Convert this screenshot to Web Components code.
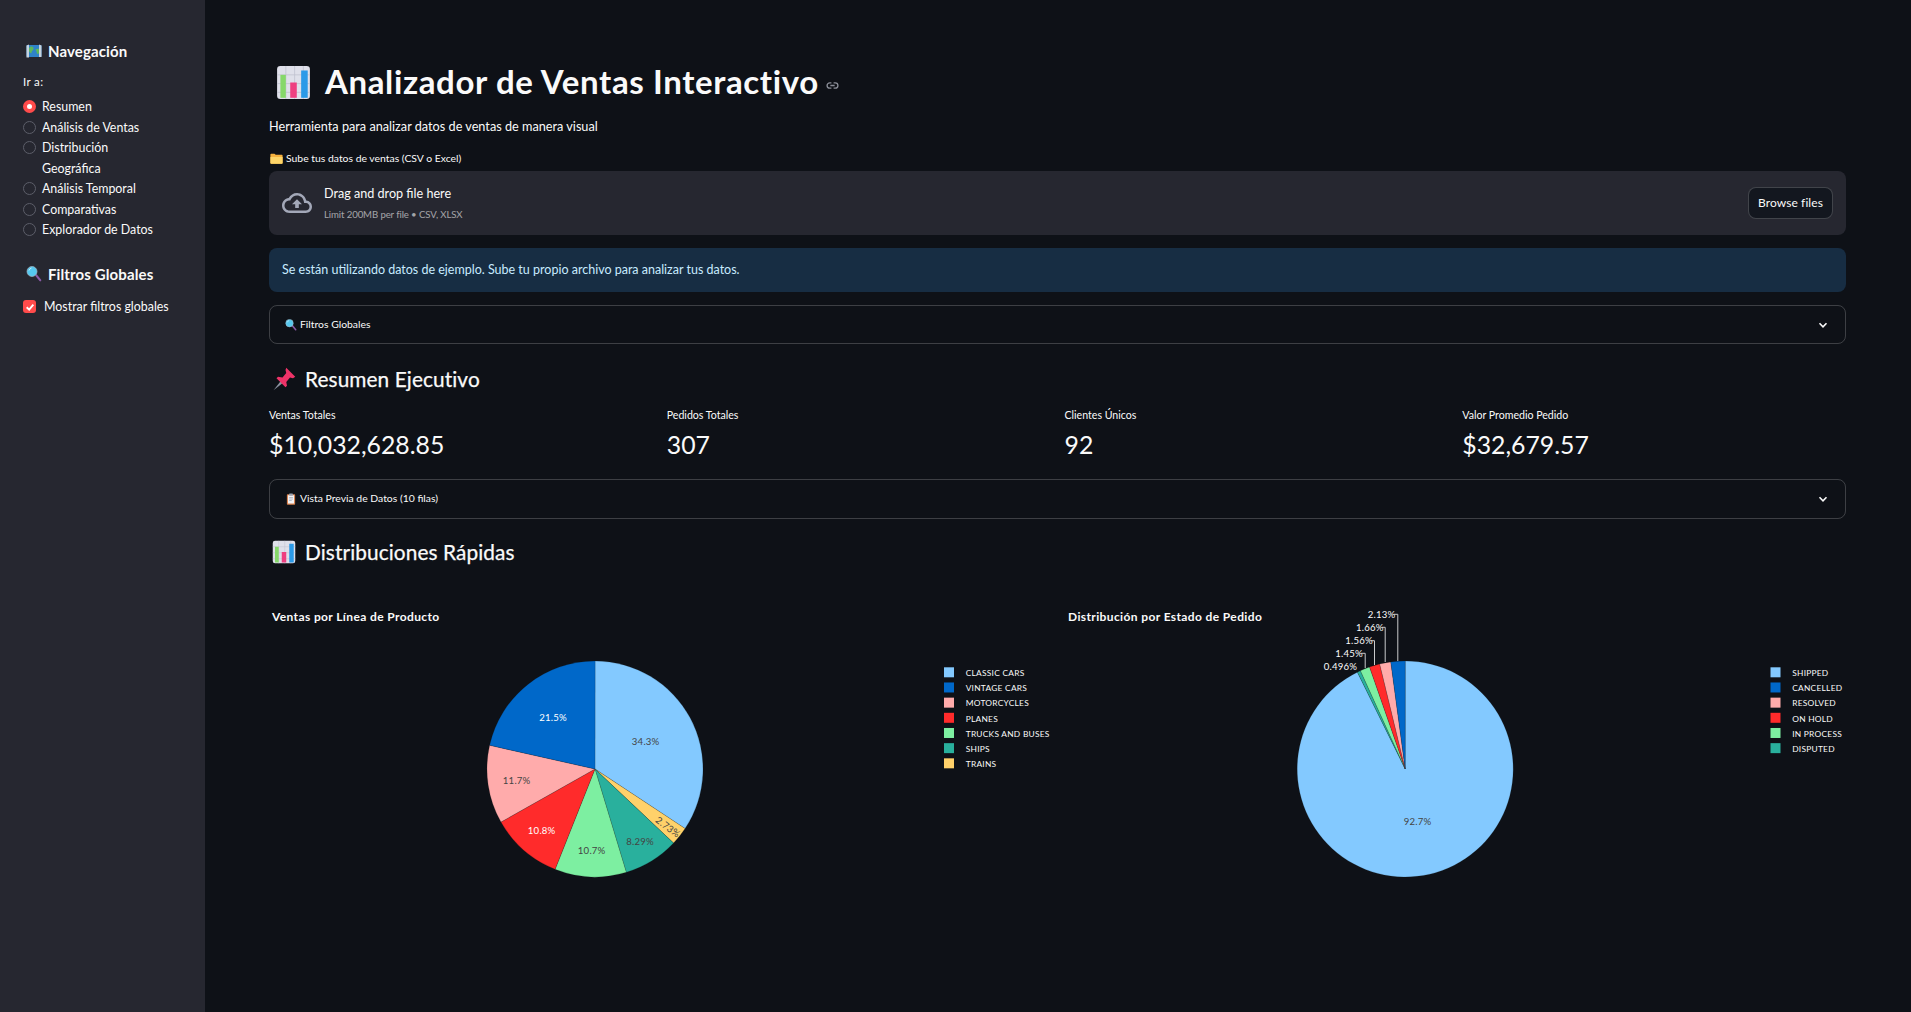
<!DOCTYPE html>
<html lang="es"><head><meta charset="utf-8"><title>Analizador de Ventas</title>
<style>
html,body{margin:0;height:100%;background:#0e1117;color:#fafafa;font-family:Lato,"Noto Sans",sans-serif;overflow:hidden}
.app{display:flex;height:1012px}
main{flex:1;min-width:0;padding:60px 65px 0 64px;display:flex;flex-direction:column}
.sub{font-size:12.7px;height:22px;line-height:22px;margin-top:11px}
.upl-label{margin-top:13px}
x-uploader{margin-top:5px}
x-info{margin-top:13px}
x-expander{margin-top:13px}
x-heading{margin-top:15px}
x-metrics{margin-top:6px}
.exp2{margin-top:14px}
.h2{margin-top:13px}
.charts{display:grid;grid-template-columns:1fr 1fr;gap:16px;margin-top:18px}
</style></head>
<body>
<template id="t-side">
<style>
:host{display:flex;flex-direction:column;width:205px;flex:none;background:#262730;padding:0 0 0 23px;box-sizing:border-box;color:#fafafa}
.h{display:flex;align-items:center;gap:6px;height:24px;padding-left:3px;font-weight:700;font-size:15px;letter-spacing:.12px}
.first{margin-top:39px}
.lab{font-size:11.5px;height:16px;line-height:16px;margin:11px 0 7px;letter-spacing:.35px}
.second{margin-top:21px}
::slotted(x-check){margin-top:11px}
</style>
<div class="h first"><x-emoji name="map" size="16"></x-emoji>Navegación</div>
<div class="lab">Ir a:</div>
<slot name="radios"></slot>
<div class="h second"><x-emoji name="search" size="16"></x-emoji>Filtros Globales</div>
<slot name="check"></slot>
</template>

<template id="t-radio">
<style>
:host{display:flex;align-items:flex-start;gap:6px;font-size:12.4px;line-height:20.5px;max-width:139px}
i{flex:none;width:13px;height:13px;border-radius:50%;box-sizing:border-box;border:1.5px solid #5c5e69;margin-top:3px;display:block}
:host([checked]) i{background:#ff4b4b;border:4px solid #ff4b4b}
:host([checked]) i::after{content:"";display:block;width:5px;height:5px;border-radius:50%;background:#fff}
span{white-space:normal}
</style><i></i><span><slot></slot></span>
</template>

<template id="t-check">
<style>
:host{display:flex;align-items:center;gap:8px;font-size:12.4px;height:20px}
i{flex:none;width:13px;height:13px;border-radius:3px;background:#ff4b4b;display:flex;align-items:center;justify-content:center}
svg{width:10px;height:10px}
</style><i><svg viewBox="0 0 12 12"><path d="M2 6.3 5 9.2 10 3.2" fill="none" stroke="#fff" stroke-width="2.2"/></svg></i><span><slot></slot></span>
</template>

<template id="t-title">
<style>
:host{display:flex;align-items:center;height:44px;font-size:33px;font-weight:700;letter-spacing:.62px;padding-left:7px}
x-emoji{margin-right:14px}
span{margin-top:-2px}
svg{margin-left:7px;margin-top:6px;width:13px;height:13px}
</style><x-emoji name="chart" size="35"></x-emoji><span><slot></slot></span>
<svg viewBox="0 0 24 24" fill="none" stroke="#8b8e98" stroke-width="2.4"><path d="M10 7H7a5 5 0 0 0 0 10h3M14 7h3a5 5 0 0 1 0 10h-3M8 12h8"/></svg>
</template>

<template id="t-heading">
<style>
:host{display:flex;align-items:center;height:40px;font-size:20.8px;-webkit-text-stroke:.25px #fafafa;letter-spacing:.1px;padding-left:3px}
x-emoji{margin-right:9px}
span{margin-top:-2px}
</style><x-emoji size="24"></x-emoji><span><slot></slot></span>
</template>

<template id="t-label">
<style>
:host{display:flex;align-items:center;gap:3px;height:16px;font-size:10.4px;padding-left:1px}
</style><x-emoji name="folder" size="13"></x-emoji><span><slot></slot></span>
</template>

<template id="t-upl">
<style>
:host{display:flex;align-items:center;height:64px;background:#262730;border-radius:8px;padding:0 13px 0 13px;box-sizing:border-box}
svg{width:30px;height:30px;fill:#a3a8b8;flex:none;margin-right:12px}
.t{flex:1;display:flex;flex-direction:column;gap:5px;padding-top:2px}
.a{font-size:12.6px;line-height:16px}
.b{font-size:9.6px;line-height:16px;color:rgba(250,250,250,.6);letter-spacing:-.1px}
button{width:85px;height:32px;background:#13171f;color:#fafafa;border:1px solid rgba(250,250,250,.2);border-radius:8px;font:12px Lato,"Noto Sans",sans-serif;letter-spacing:.1px;padding:0 0 2px}
</style>
<svg viewBox="0 0 24 24"><path d="M19.35 10.04C18.67 6.59 15.64 4 12 4 9.11 4 6.6 5.64 5.35 8.04 2.34 8.36 0 10.91 0 14c0 3.31 2.69 6 6 6h13c2.76 0 5-2.24 5-5 0-2.64-2.05-4.78-4.65-4.96zM19 18H6c-2.21 0-4-1.79-4-4 0-2.05 1.53-3.76 3.56-3.97l1.07-.11.5-.95C8.08 7.14 9.94 6 12 6c2.62 0 4.88 1.86 5.39 4.43l.3 1.5 1.53.11c1.56.1 2.78 1.41 2.78 2.96 0 1.65-1.35 3-3 3zM8 13h2.55v3h2.9v-3H16l-4-4z"/></svg>
<div class="t"><div class="a">Drag and drop file here</div><div class="b">Limit 200MB per file • CSV, XLSX</div></div>
<button>Browse files</button>
</template>

<template id="t-info">
<style>
:host{display:flex;align-items:center;height:44px;background:#172d43;color:#c7ebff;border-radius:8px;padding:0 13px 2px;font-size:12.5px;box-sizing:border-box}
</style><slot></slot>
</template>

<template id="t-exp">
<style>
:host{display:flex;align-items:center;height:39px;border:1px solid rgba(250,250,250,.2);border-radius:8px;box-sizing:border-box;padding:0 16px 0 15px;font-size:10.4px;gap:3px}
span{flex:1;margin-top:-2px}
svg{width:12px;height:12px}
</style><x-emoji size="12"></x-emoji><span><slot></slot></span>
<svg viewBox="0 0 12 12"><path d="M2.5 4.3 6 7.8 9.5 4.3" fill="none" stroke="#fafafa" stroke-width="1.6"/></svg>
</template>

<template id="t-metrics">
<style>
:host{display:grid;grid-template-columns:repeat(4,1fr);gap:16px;height:60px;padding-right:2px}
</style><slot></slot>
</template>

<template id="t-metric">
<style>
:host{display:block}
.l{font-size:10.6px;height:20px;line-height:20px}
.v{font-size:24.8px;line-height:40px}
</style><div class="l"></div><div class="v"></div>
</template>

<div class="app">
<x-sidebar>
  <div slot="radios">
    <x-radio checked>Resumen</x-radio>
    <x-radio>Análisis de Ventas</x-radio>
    <x-radio>Distribución Geográfica</x-radio>
    <x-radio>Análisis Temporal</x-radio>
    <x-radio>Comparativas</x-radio>
    <x-radio>Explorador de Datos</x-radio>
  </div>
  <x-check slot="check">Mostrar filtros globales</x-check>
</x-sidebar>
<main>
  <x-title>Analizador de Ventas Interactivo</x-title>
  <div class="sub">Herramienta para analizar datos de ventas de manera visual</div>
  <x-label class="upl-label">Sube tus datos de ventas (CSV o Excel)</x-label>
  <x-uploader></x-uploader>
  <x-info>Se están utilizando datos de ejemplo. Sube tu propio archivo para analizar tus datos.</x-info>
  <x-expander icon="search">Filtros Globales</x-expander>
  <x-heading icon="pin">Resumen Ejecutivo</x-heading>
  <x-metrics>
    <x-metric label="Ventas Totales" value="$10,032,628.85"></x-metric>
    <x-metric label="Pedidos Totales" value="307"></x-metric>
    <x-metric label="Clientes Únicos" value="92"></x-metric>
    <x-metric label="Valor Promedio Pedido" value="$32,679.57"></x-metric>
  </x-metrics>
  <x-expander class="exp2" icon="clip" style="height:40px">Vista Previa de Datos (10 filas)</x-expander>
  <x-heading class="h2" icon="chart">Distribuciones Rápidas</x-heading>
  <div class="charts">
    <x-pie data='{"cx":326,"lx":675,"tx":3,"title":"Ventas por Línea de Producto","slices":[
      {"v":34.3,"c":"#83c9ff","l":"34.3%","x":376.7,"y":151.7,"t":"#444","n":"CLASSIC CARS","o":0},
      {"v":2.73,"c":"#ffd16a","l":"2.73%","x":399,"y":237,"t":"#444","r":37,"n":"TRAINS","o":6},
      {"v":8.29,"c":"#29b09d","l":"8.29%","x":371,"y":251.7,"t":"#444","n":"SHIPS","o":5},
      {"v":10.7,"c":"#7defa1","l":"10.7%","x":322.7,"y":260.7,"t":"#444","n":"TRUCKS AND BUSES","o":4},
      {"v":10.8,"c":"#ff2b2b","l":"10.8%","x":272.7,"y":240,"t":"#fff","n":"PLANES","o":3},
      {"v":11.7,"c":"#ffabab","l":"11.7%","x":247.7,"y":190.7,"t":"#444","n":"MOTORCYCLES","o":2},
      {"v":21.5,"c":"#0068c9","l":"21.5%","x":284,"y":127,"t":"#fff","n":"VINTAGE CARS","o":1}]}'></x-pie>
    <x-pie data='{"cx":339.2,"lx":704.5,"tx":2,"title":"Distribución por Estado de Pedido","slices":[
      {"v":92.7,"c":"#83c9ff","l":"92.7%","x":351.5,"y":231.4,"t":"#444","n":"SHIPPED","o":0},
      {"v":0.496,"c":"#29b09d","l":"0.496%","x":274.5,"y":76.7,"t":"#fafafa","n":"DISPUTED","o":5},
      {"v":1.45,"c":"#7defa1","l":"1.45%","x":283.2,"y":63.3,"w":12,"line":[299.2,78],"t":"#fafafa","n":"IN PROCESS","o":4},
      {"v":1.56,"c":"#ff2b2b","l":"1.56%","x":293.2,"y":50.7,"w":12,"line":[308.5,75],"t":"#fafafa","n":"ON HOLD","o":3},
      {"v":1.66,"c":"#ffabab","l":"1.66%","x":303.8,"y":37.3,"w":12,"line":[319.2,72],"t":"#fafafa","n":"RESOLVED","o":2},
      {"v":2.13,"c":"#0068c9","l":"2.13%","x":315.5,"y":24.3,"w":12,"line":[331.8,71],"t":"#fafafa","n":"CANCELLED","o":1}]}'></x-pie>
  </div>
</main>
</div>

<script>
const EMOJI={
chart:`<rect x="1" y="1" width="30" height="30" rx="3" fill="#dfe0ea"/><path d="M1 9H31M1 17H31M1 25H31M9 1V31M17 1V31M25 1V31" stroke="#bfc0cf" stroke-width=".7"/><path d="M4 9h5v21H4z" fill="#86d86a"/><path d="M13 16h6v14h-6z" fill="#ee3f80"/><path d="M23 5h6v25h-6z" fill="#2b9ae8"/>`,
map:`<rect x="1" y="4" width="30" height="24" rx="2" fill="#2f83c9"/><path d="M8 8c4-2 8 0 7 4s-4 3-4 7-4 0-5-3 0-6 2-8zM19 13c3-2 8-2 9 1s-3 9-5 8-1-5-4-9z" fill="#5cb85c"/><path d="M1 5l5-2v26l-5 0zM26 3l5 2v23h-5z" fill="#c5d2de"/>`,
search:`<path d="M18 19l3-3 9 11a2 2 0 0 1-3 3z" fill="#8a5aa6"/><circle cx="12" cy="11" r="10" fill="#56c8ef"/><circle cx="12" cy="11" r="10" fill="none" stroke="#9fb8c8" stroke-width="1.4"/><path d="M6 9a7 7 0 0 1 5-5" stroke="#bdeeff" stroke-width="2" fill="none"/>`,
folder:`<path d="M1 6a2 2 0 0 1 2-2h8l3 3h15a2 2 0 0 1 2 2v18a2 2 0 0 1-2 2H3a2 2 0 0 1-2-2z" fill="#f5b13e"/><path d="M1 12h30v15a2 2 0 0 1-2 2H3a2 2 0 0 1-2-2z" fill="#fdd568"/>`,
pin:`<path d="M2 31 13 17l3 3z" fill="#8c93a0"/><path d="M19 1l12 12-3 2-4-1-5 6 1 5-2 2L6 15l2-2 6 1 5-6-1-4z" fill="#ee3368"/>`,
clip:`<rect x="5" y="3" width="22" height="28" rx="2" fill="#d8834f"/><rect x="8" y="6" width="16" height="22" fill="#f2f2f5"/><path d="M11 12h10M11 16h10M11 20h7" stroke="#8f97a8" stroke-width="1.6"/><rect x="11" y="1" width="10" height="6" rx="1.5" fill="#9aa3b2"/>`
};
class Base extends HTMLElement{
  mount(id){const r=this.attachShadow({mode:'open'});r.appendChild(document.getElementById(id).content.cloneNode(true));return r}
}
customElements.define('x-emoji',class extends HTMLElement{
  static get observedAttributes(){return ['name','size']}
  constructor(){super();this.attachShadow({mode:'open'})}
  attributeChangedCallback(){this.draw()}
  connectedCallback(){this.draw()}
  draw(){
    const s=this.getAttribute('size')||16;
    this.shadowRoot.innerHTML=`<style>:host{display:inline-flex;flex:none}svg{display:block}</style><svg width="${s}" height="${s}" viewBox="0 0 32 32">${EMOJI[this.getAttribute('name')]||''}</svg>`;
  }
});
function simple(tag,id){customElements.define(tag,class extends Base{constructor(){super();this.mount(id)}})}
simple('x-sidebar','t-side');simple('x-radio','t-radio');simple('x-check','t-check');simple('x-title','t-title');
simple('x-label','t-label');simple('x-uploader','t-upl');simple('x-info','t-info');simple('x-metrics','t-metrics');
customElements.define('x-heading',class extends Base{constructor(){super();const r=this.mount('t-heading');r.querySelector('x-emoji').setAttribute('name',this.getAttribute('icon'))}});
customElements.define('x-expander',class extends Base{constructor(){super();const r=this.mount('t-exp');r.querySelector('x-emoji').setAttribute('name',this.getAttribute('icon'))}});
customElements.define('x-metric',class extends Base{constructor(){super();const r=this.mount('t-metric');r.querySelector('.l').textContent=this.getAttribute('label');r.querySelector('.v').textContent=this.getAttribute('value')}});
customElements.define('x-pie',class extends HTMLElement{
  constructor(){
    super();
    const d=JSON.parse(this.getAttribute('data'));
    const R=108,cx=d.cx,cy=179;let a=0,out='';
    const pt=t=>[cx+R*Math.sin(t*2*Math.PI/100),cy-R*Math.cos(t*2*Math.PI/100)];
    for(const s of d.slices){
      const [x0,y0]=pt(a);const [x1,y1]=pt(a+s.v);
      out+=`<path d="M${cx} ${cy}L${x0.toFixed(2)} ${y0.toFixed(2)}A${R} ${R} 0 ${s.v>50?1:0} 1 ${x1.toFixed(2)} ${y1.toFixed(2)}Z" fill="${s.c}" stroke="#0e1117" stroke-opacity=".25" stroke-width=".6"/>`;
      a+=s.v;
    }
    for(const s of d.slices){
      if(s.line)out+=`<path d="M${s.x+s.w} ${s.y}H${s.line[0]}V${s.line[1]}" fill="none" stroke="#c9cacc" stroke-width="1"/>`;
      const rot=s.r?` transform="rotate(${s.r} ${s.x} ${s.y})"`:'';
      out+=`<text x="${s.x}" y="${s.y}" text-anchor="middle" dominant-baseline="central" fill="${s.t}" font-size="9.6" letter-spacing=".2"${rot}>${s.l}</text>`;
    }
    d.slices.forEach(s=>{ if(!s.n)return;
      const y=82.3+s.o*15.17;
      out+=`<rect x="${d.lx}" y="${y-5}" width="10" height="10" fill="${s.c}"/>`;
      out+=`<text x="${d.lx+21.7}" y="${y+.7}" dominant-baseline="central" fill="#fafafa" font-size="8.4" letter-spacing=".25">${s.n}</text>`;
    });
    out+=`<text x="${d.tx}" y="26" dominant-baseline="central" fill="#fafafa" font-size="12" font-weight="700" letter-spacing=".38">${d.title}</text>`;
    const r=this.attachShadow({mode:'open'});
    r.innerHTML=`<style>:host{display:block;height:400px;min-width:0}svg{display:block;width:100%;height:100%;overflow:visible;font-family:Lato,"Noto Sans",sans-serif}</style><svg>${out}</svg>`;
  }
});
</script>
</body></html>
